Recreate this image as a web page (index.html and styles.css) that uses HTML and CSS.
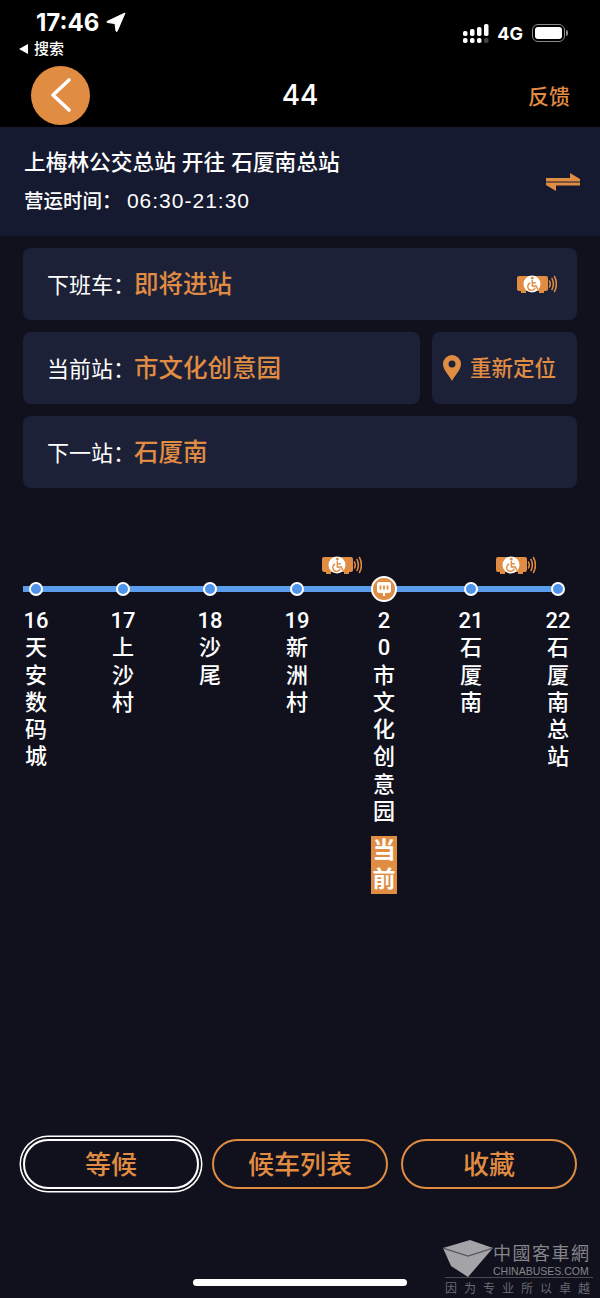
FILE: index.html
```html
<!doctype html>
<html lang="zh-CN">
	<head>
		<meta charset="UTF-8" />
		<meta name="viewport" content="width=device-width, initial-scale=1.0" />
		<title>44</title>
		<link rel="stylesheet" href="styles.css">
	</head>

	<body>
		<svg class="defs" width="0" height="0">
			<symbol id="busIcon" viewBox="0 0 40 20">
				<path d="M2 2h27q2 0 2 2v11q0 2-2 2h-2v2h-5v-2H9v2H4v-2H2q-2 0-2-2V4q0-2 2-2z" fill="#e08c42" />
				<circle cx="15" cy="10" r="8.500" fill="#fff" />
				<circle cx="15.300" cy="4.200" r="1.400" fill="#e08c42" />
				<path d="M15.300 6v6h4l1.500 3.500M15.300 8.800h3.500M13.200 9a3.800 3.800 0 1 0 5 4.500" fill="none" stroke="#e08c42" stroke-width="1.400" />
				<path d="M32.500 7q1.500 3 0 6M35 4.500q2.800 5.500 0 11M37.500 2.500q3.800 7.500 0 15" fill="none" stroke="#e08c42" stroke-width="1.600" stroke-linecap="round" />
			</symbol>
		</svg>

		<header class="topbar">
			<div class="status">
				<div class="status-left">
					<div class="clock">17:46
						<svg class="gps" width="20" height="20" viewBox="0 0 20 20"><path d="M19 1 1 9.500q-.5.800.5 1L9 11.500l1 7.500q.5 1 1.200.2z" fill="#fff" stroke="#fff" stroke-width="1" stroke-linejoin="round" /></svg>
					</div>
					<div class="backlink"><span class="tri"></span>搜索</div>
				</div>
				<div class="status-right">
					<svg width="26" height="19" viewBox="0 0 26 19">
						<g fill="#fff">
							<rect x="0" y="7" width="4.500" height="5" rx="1.800" /><rect x="0" y="14" width="4.500" height="5" rx="1.800" />
							<rect x="7" y="5" width="4.500" height="7" rx="1.800" /><rect x="7" y="14" width="4.500" height="5" rx="1.800" />
							<rect x="14" y="3" width="4.500" height="9" rx="1.800" /><rect x="14" y="14" width="4.500" height="5" rx="1.800" />
							<rect x="21" y="0" width="4.500" height="12" rx="1.800" />
						</g>
						<rect x="21" y="14" width="4.500" height="5" rx="1.800" fill="#444" />
					</svg>
					<span class="net">4G</span>
					<div class="battery"><div class="battery-fill"></div></div>
					<div class="battery-cap"></div>
				</div>
			</div>
			<nav class="navrow">
				<div class="back">
					<svg width="24" height="36" viewBox="0 0 24 36"><path d="M20 3 4 18l16 15" fill="none" stroke="#fff" stroke-width="3.600" stroke-linecap="round" stroke-linejoin="round" /></svg>
				</div>
				<div class="route-no">44</div>
				<div class="feedback">反馈</div>
			</nav>
		</header>

		<section class="band">
			<div>
				<div class="band-title">上梅林公交总站 开往 石厦南总站</div>
				<div class="band-time">营运时间： <span class="band-hours">06:30-21:30</span></div>
			</div>
			<svg class="swap" width="36" height="20" viewBox="0 0 36 20">
				<path d="M1 6h24V1l10 6v2.500H1zM35 10.500V13.500H11V19L1 13v-2.500z" fill="#e08c42" />
			</svg>
		</section>

		<section class="cards">
			<div class="card">
				<span class="label">下班车：</span><span class="value">即将进站</span>
				<svg class="card-bus" width="40" height="20"><use href="#busIcon" /></svg>
			</div>
			<div class="card-row">
				<div class="card card-grow">
					<span class="label">当前站：</span><span class="value">市文化创意园</span>
				</div>
				<div class="card card-locate">
					<svg width="20" height="28" viewBox="0 0 20 28"><path fill-rule="evenodd" d="M10 1a9 9 0 0 1 9 9c0 6-6 11-9 17C7 21 1 16 1 10a9 9 0 0 1 9-9zm0 5.500a3.500 3.500 0 1 0 0 7 3.500 3.500 0 0 0 0-7z" fill="#e08c42" /></svg>
					<span class="locate-text">重新定位</span>
				</div>
			</div>
			<div class="card">
				<span class="label">下一站：</span><span class="value">石厦南</span>
			</div>
		</section>

		<section class="line">
			<div class="track"></div>
			<div class="stops">
				<div class="stop">
					<div class="dot"></div>
					<div class="name">16<br>天<br>安<br>数<br>码<br>城</div>
				</div>
				<div class="stop">
					<div class="dot"></div>
					<div class="name">17<br>上<br>沙<br>村</div>
				</div>
				<div class="stop">
					<div class="dot"></div>
					<div class="name">18<br>沙<br>尾</div>
				</div>
				<div class="stop">
					<svg class="stop-bus" width="40" height="20"><use href="#busIcon" /></svg>
					<div class="dot"></div>
					<div class="name">19<br>新<br>洲<br>村</div>
				</div>
				<div class="stop">
					<div class="dot dot-now">
						<svg width="16" height="16" viewBox="0 0 16 16">
							<path d="M3 1h10q2 0 2 2v7q0 2-2 2H9v3H7v-3H3q-2 0-2-2V3q0-2 2-2z" fill="#fff" />
							<path d="M4.500 4.500v4M8 4.500v4M11.500 4.500v4" stroke="#e08c42" stroke-width="1.800" />
						</svg>
					</div>
					<div class="name">2<br>0<br>市<br>文<br>化<br>创<br>意<br>园</div>
					<div class="now-tag">当前</div>
				</div>
				<div class="stop">
					<svg class="stop-bus" width="40" height="20"><use href="#busIcon" /></svg>
					<div class="dot"></div>
					<div class="name">21<br>石<br>厦<br>南</div>
				</div>
				<div class="stop">
					<div class="dot"></div>
					<div class="name">22<br>石<br>厦<br>南<br>总<br>站</div>
				</div>
			</div>
		</section>

		<section class="actions">
			<div class="action action-focus">等候</div>
			<div class="action">候车列表</div>
			<div class="action">收藏</div>
		</section>

		<div class="homebar"></div>

		<div class="watermark">
			<svg class="wm-logo" width="50" height="38" viewBox="0 0 50 38">
				<path d="M0 8 27 0l23 8-25 29L8 26z" fill="#a3a3a8" />
				<path d="M0 8l25 8 25-8" fill="none" stroke="#55555c" stroke-width="1.200" />
			</svg>
			<div class="wm-text">
				<div class="wm-name">中國客車網</div>
				<div class="wm-site">CHINABUSES.COM</div>
			</div>
			<div class="wm-slogan">因为专业所以卓越</div>
		</div>
	</body>
</html>
```

FILE: styles.css
```css
body {
	position: relative;
	margin: 0;
	width: 600px;
	height: 1298px;
	overflow: hidden;
	background-color: #10111d;
	color: #fff;
	font-family: "Liberation Sans", "Noto Sans CJK SC", sans-serif;
}

.defs {
	display: block;
	position: absolute;
}

.topbar {
	height: 127px;
	background-color: #000;
}

.status {
	display: flex;
	justify-content: space-between;
	height: 65px;
}

.status-left {
	padding-left: 19px;
}

.clock {
	display: flex;
	align-items: center;
	gap: 7px;
	height: 22px;
	margin-top: 11px;
	padding-left: 17px;
	font-family: Inter, sans-serif;
	font-size: 24px;
	font-weight: 700;
}

.backlink {
	display: flex;
	align-items: center;
	gap: 6px;
	margin-top: 6px;
	font-size: 15px;
	font-weight: 500;
	line-height: 20px;
}

.tri {
	border-top: 5px solid transparent;
	border-bottom: 5px solid transparent;
	border-right: 9px solid #fff;
}

.status-right {
	display: flex;
	align-items: center;
	height: 66px;
	padding-right: 32px;
	box-sizing: border-box;
}

.net {
	margin-left: 8px;
	margin-right: 9px;
	font-family: Inter, sans-serif;
	font-size: 18px;
	font-weight: 700;
}

.battery {
	box-sizing: border-box;
	width: 33px;
	height: 18px;
	padding: 2px;
	border: 1.500px solid #8a8a8a;
	border-radius: 6px;
}

.battery-fill {
	height: 100%;
	background-color: #fff;
	border-radius: 3px;
}

.battery-cap {
	width: 2px;
	height: 6px;
	margin-left: 1px;
	background-color: #8a8a8a;
	border-radius: 0 2px 2px 0;
}

.navrow {
	position: relative;
	display: flex;
	align-items: center;
	justify-content: space-between;
	height: 60px;
	padding: 0 30px 0 31px;
}

.back {
	display: flex;
	align-items: center;
	justify-content: center;
	width: 59px;
	height: 59px;
	background-color: #e08c42;
	border-radius: 50%;
}

.route-no {
	position: absolute;
	left: 0;
	right: 0;
	font-family: Inter, sans-serif;
	font-size: 28px;
	font-weight: 500;
	text-align: center;
}

.feedback {
	color: #e08c42;
	font-size: 21px;
	font-weight: 500;
}

.band {
	display: flex;
	align-items: center;
	justify-content: space-between;
	box-sizing: border-box;
	height: 109px;
	padding: 0 19px 0 24px;
	background-color: #161a30;
}

.band-title {
	font-size: 21.700px;
	font-weight: 500;
	line-height: 28px;
}

.band-time {
	margin-top: 10px;
	font-size: 19.500px;
	font-weight: 500;
	line-height: 28px;
}

.band-hours {
	font-size: 21px;
	font-weight: 400;
	letter-spacing: 1px;
}

.cards {
	display: flex;
	flex-direction: column;
	gap: 12px;
	padding: 12px 23px 0;
}

.card-row {
	display: flex;
	gap: 12px;
}

.card {
	display: flex;
	align-items: center;
	box-sizing: border-box;
	height: 72px;
	padding: 0 20px 0 24px;
	background-color: #1c2138;
	border-radius: 8px;
}

.card-grow {
	flex: 1;
}

.label {
	flex: none;
	width: 87px;
	margin-bottom: 2px;
	font-size: 22px;
	white-space: nowrap;
}

.value {
	margin-bottom: 4px;
	color: #e08c42;
	font-size: 24.500px;
	font-weight: 500;
}

.card-bus {
	margin-left: auto;
}

.card-locate {
	width: 145px;
	padding: 0 0 0 10px;
	gap: 8px;
}

.locate-text {
	margin-bottom: 4px;
	color: #e08c42;
	font-size: 21.500px;
	font-weight: 500;
}

.line {
	position: relative;
	margin-top: 94px;
}

.track {
	position: absolute;
	top: 4px;
	left: 23px;
	width: 535px;
	height: 6px;
	background-color: #5b9ded;
}

.stops {
	position: relative;
	display: flex;
	gap: 61px;
	padding-left: 23px;
}

.stop {
	position: relative;
	display: flex;
	flex-direction: column;
	align-items: center;
	width: 26px;
}

.stop-bus {
	position: absolute;
	top: -27px;
	left: 38px;
}

.dot {
	box-sizing: border-box;
	width: 14px;
	height: 14px;
	background-color: #4f93ea;
	border: 2px solid #fff;
	border-radius: 50%;
}

.dot-now {
	display: flex;
	align-items: center;
	justify-content: center;
	flex: none;
	width: 26px;
	height: 26px;
	margin: -6px 0;
	background-color: #e08c42;
}

.name {
	margin-top: 11px;
	font-family: Roboto, "Noto Sans CJK SC", sans-serif;
	font-size: 22px;
	font-weight: 500;
	line-height: 27.300px;
	text-align: center;
	white-space: nowrap;
}

.now-tag {
	width: 26px;
	margin-top: 11px;
	background-color: #e08c42;
	font-size: 23px;
	font-weight: 700;
	line-height: 29px;
	text-align: center;
}

.actions {
	position: absolute;
	top: 1139px;
	left: 23px;
	right: 23px;
	display: grid;
	grid-template-columns: repeat(3, 1fr);
	gap: 13px;
}

.action {
	display: flex;
	align-items: center;
	justify-content: center;
	box-sizing: border-box;
	height: 50px;
	padding-bottom: 3px;
	border: 2px solid #e08c42;
	border-radius: 25px;
	color: #e08c42;
	font-size: 26px;
	font-weight: 500;
}

.action-focus {
	border-color: #fff;
	box-shadow: 0 0 0 2px #10111d, 0 0 0 3.500px #fff;
}

.homebar {
	position: absolute;
	left: 193px;
	bottom: 12px;
	width: 214px;
	height: 7px;
	background-color: #fff;
	border-radius: 4px;
}

.watermark {
	position: absolute;
	top: 1240px;
	left: 443px;
	width: 150px;
	height: 56px;
	color: #85858a;
}

.wm-logo {
	position: absolute;
	top: 0;
	left: 0;
}

.wm-text {
	position: absolute;
	top: 2px;
	left: 50px;
}

.wm-name {
	font-family: "Noto Sans CJK TC", sans-serif;
	font-size: 18px;
	letter-spacing: 1.500px;
	line-height: 20px;
	white-space: nowrap;
}

.wm-site {
	margin-top: 4px;
	font-size: 10.500px;
	line-height: 11px;
	white-space: nowrap;
}

.wm-slogan {
	position: absolute;
	top: 37px;
	left: 2px;
	width: 148px;
	padding-top: 5px;
	border-top: 1px solid #4a4a50;
	color: #6a6a70;
	font-size: 12px;
	line-height: 13px;
	letter-spacing: 7px;
	white-space: nowrap;
}
```
